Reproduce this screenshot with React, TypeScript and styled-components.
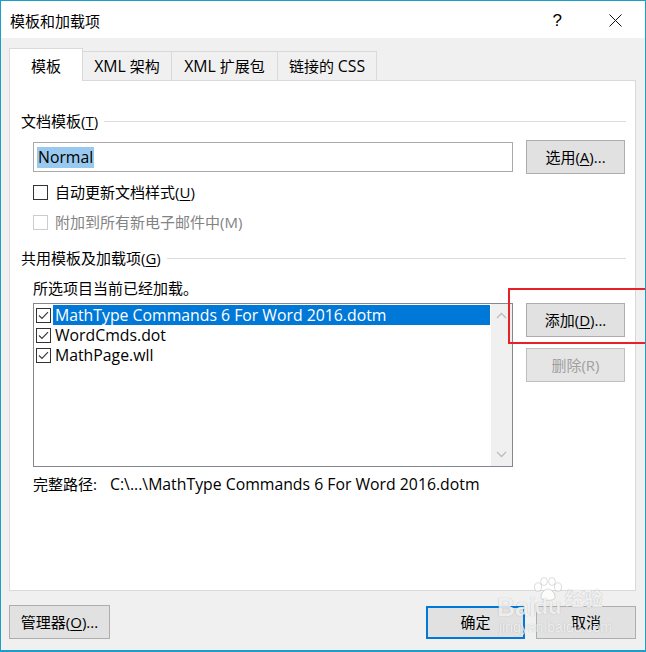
import React from 'react';
import styled, { createGlobalStyle } from 'styled-components';

const GlobalStyle = createGlobalStyle`
  html, body {
    margin: 0;
    padding: 0;
    background: #ffffff;
  }
  * {
    box-sizing: border-box;
  }
`;

const FONT = `"Open Sans", "Noto Sans CJK SC", sans-serif`;

const addins = [
  { name: 'MathType Commands 6 For Word 2016.dotm', selected: true },
  { name: 'WordCmds.dot', selected: false },
  { name: 'MathPage.wll', selected: false },
];

const tabs = [
  { latin: '', cjk: '模板', width: 74, active: true },
  { latin: 'XML ', cjk: '架构', width: 90, active: false },
  { latin: 'XML ', cjk: '扩展包', width: 107, active: false },
  { latin: '', cjk: '链接的 ', tail: 'CSS', width: 100, active: false },
];

const CheckMark = () => (
  <svg width="11" height="9" viewBox="0 0 11 9">
    <path d="M1 4.5 L4 7.5 L10 1.2" fill="none" stroke="#3c3c3c" strokeWidth="1.2" />
  </svg>
);

const Chevron = ({ up }: { up?: boolean }) => (
  <svg width="11" height="7" viewBox="0 0 11 7">
    <path
      d={up ? 'M1 6 L5.5 1.5 L10 6' : 'M1 1 L5.5 5.5 L10 1'}
      fill="none"
      stroke="#bcbcbc"
      strokeWidth="1.3"
    />
  </svg>
);

const CloseIcon = () => (
  <svg width="13" height="13" viewBox="0 0 13 13">
    <path d="M0.5 0.5 L12.5 12.5 M12.5 0.5 L0.5 12.5" stroke="#111" strokeWidth="1" />
  </svg>
);

const Paw = () => (
  <svg width="30" height="24" viewBox="0 0 30 24">
    <g fill="rgba(255,255,255,0.8)" stroke="rgba(0,0,0,0.14)" strokeWidth="1">
      <ellipse cx="5" cy="10" rx="3.5" ry="4.2" />
      <ellipse cx="11" cy="4.5" rx="3.3" ry="4" />
      <ellipse cx="19" cy="4.5" rx="3.3" ry="4" />
      <ellipse cx="25" cy="10" rx="3.5" ry="4.2" />
      <path d="M8 21 C8 15 12 12 15 12 C18 12 22 15 22 21 C22 24 8 24 8 21 Z" />
    </g>
  </svg>
);

const App = () => {
  return (
    <>
      <GlobalStyle />
      <Window>
        <TitleBar>
          <Title>模板和加载项</Title>
          <TitleButtons>
            <HelpMark>?</HelpMark>
            <CloseIcon />
          </TitleButtons>
        </TitleBar>

        <Body>
          <TabStrip>
            {tabs.map((t) => (
              <Tab key={t.cjk} $active={t.active} $width={t.width}>
                {t.latin && <Latin>{t.latin}</Latin>}
                {t.cjk}
                {t.tail && <Latin>{t.tail}</Latin>}
              </Tab>
            ))}
          </TabStrip>

          <Panel>
            <GroupHeader $top={30}>
              <GroupTitle>
                文档模板(<Key>T</Key>)
              </GroupTitle>
              <GroupLine />
            </GroupHeader>

            <TemplateRow>
              <TextInput>
                <Selection>
                  <Latin>Normal</Latin>
                </Selection>
              </TextInput>
              <DialogButton>
                选用(<Key>A</Key>)...
              </DialogButton>
            </TemplateRow>

            <CheckRow $top={8}>
              <CheckBox />
              <CheckLabel>
                自动更新文档样式(<Key>U</Key>)
              </CheckLabel>
            </CheckRow>
            <CheckRow $top={10}>
              <CheckBox $disabled />
              <CheckLabel $disabled>附加到所有新电子邮件中(M)</CheckLabel>
            </CheckRow>

            <GroupHeader $top={16}>
              <GroupTitle>
                共用模板及加载项(<Key>G</Key>)
              </GroupTitle>
              <GroupLine />
            </GroupHeader>

            <Caption>所选项目当前已经加载。</Caption>

            <AddinRow>
              <ListBox>
                <ListItems>
                  {addins.map((a) => (
                    <ListItem key={a.name}>
                      <ListCheck>
                        <CheckMark />
                      </ListCheck>
                      <ItemText $selected={a.selected}>
                        <Latin>{a.name}</Latin>
                      </ItemText>
                    </ListItem>
                  ))}
                </ListItems>
                <ScrollBar>
                  <Chevron up />
                  <Chevron />
                </ScrollBar>
              </ListBox>
              <ButtonColumn>
                <DialogButton>
                  添加(<Key>D</Key>)...
                </DialogButton>
                <DialogButton $disabled>删除(R)</DialogButton>
                <Highlight />
              </ButtonColumn>
            </AddinRow>

            <PathRow>
              <PathLabel>完整路径:</PathLabel>
              <Latin>C:\...\MathType Commands 6 For Word 2016.dotm</Latin>
            </PathRow>
          </Panel>
        </Body>

        <Footer>
          <DialogButton $width={101} $height={34}>
            管理器(<Key>O</Key>)...
          </DialogButton>
          <FooterRight>
            <DialogButton $default $height={33}>
              确定
            </DialogButton>
            <DialogButton $width={100} $height={33}>
              取消
            </DialogButton>
          </FooterRight>
          <Watermark>
            <WatermarkLogo>
              <span>Bai</span>
              <DuStack>
                <Paw />
                <DuText>du</DuText>
              </DuStack>
              <WatermarkCjk>经验</WatermarkCjk>
            </WatermarkLogo>
            <WatermarkUrl>jingyan.baidu.com</WatermarkUrl>
          </Watermark>
        </Footer>
      </Window>
    </>
  );
};

export default App;

const Window = styled.div`
  position: relative;
  display: flex;
  flex-direction: column;

  width: 646px;
  height: 652px;
  border: 1px solid #1a9fc9;
  border-bottom-width: 2px;
  background: #f0f0f0;
  font-family: ${FONT};
  font-size: 15px;
  color: #000;
  overflow: hidden;
`;

const Latin = styled.span`
  font-size: 15.8px;
`;

const TitleBar = styled.div`
  display: flex;
  align-items: center;
  justify-content: space-between;

  height: 37px;
  padding: 0 23px 0 9px;
  background: #ffffff;
`;

const Title = styled.span`
  font-size: 15px;
  line-height: 20px;
  margin-top: 2px;
`;

const TitleButtons = styled.div`
  display: flex;
  align-items: center;
  gap: 47px;
  margin-top: 2px;
`;

const HelpMark = styled.span`
  font-family: "Liberation Sans", sans-serif;
  font-size: 17px;
  line-height: 20px;
`;

const Body = styled.div`
  display: flex;
  flex-direction: column;
  padding: 10px 9px 0 8px;
`;

const TabStrip = styled.div`
  position: relative;
  z-index: 1;
  display: flex;
  align-items: flex-end;
  height: 33px;
  margin-bottom: -1px;
`;

const Tab = styled.div<{ $active?: boolean; $width: number }>`
  display: flex;
  align-items: center;
  justify-content: center;

  width: ${({ $width }) => $width}px;
  height: ${({ $active }) => ($active ? '33px' : '30px')};
  padding-top: ${({ $active }) => ($active ? '2px' : '0')};
  margin-left: ${({ $active }) => ($active ? '0' : '-1px')};
  border: 1px solid #d9d9d9;
  border-bottom: ${({ $active }) => ($active ? 'none' : '1px solid #d9d9d9')};
  background: ${({ $active }) => ($active ? '#ffffff' : '#f0f0f0')};
  line-height: 20px;
  white-space: pre;
`;

const Panel = styled.div`
  position: relative;
  display: flex;
  flex-direction: column;

  height: 511px;
  padding: 0 9px 0 23px;
  border: 1px solid #d9d9d9;
  background: #ffffff;
`;

const GroupHeader = styled.div<{ $top: number }>`
  display: flex;
  align-items: center;
  gap: 6px;
  height: 20px;
  margin-top: ${({ $top }) => $top}px;
  margin-left: -12px;
`;

const GroupTitle = styled.span`
  line-height: 20px;
  white-space: nowrap;
`;

const GroupLine = styled.div`
  flex: 1;
  height: 1px;
  background: #dcdcdc;
`;

const Key = styled.span`
  text-decoration: underline;
  text-underline-offset: 2px;
`;

const TemplateRow = styled.div`
  display: flex;
  align-items: center;
  justify-content: space-between;
  height: 34px;
  margin-top: 9px;
  padding-right: 1px;
`;

const TextInput = styled.div`
  display: flex;
  align-items: center;

  width: 480px;
  height: 30px;
  padding-left: 3px;
  border: 1px solid #a9a9a9;
  background: #ffffff;
`;

const Selection = styled.span`
  padding: 0 1px;
  background: #99c9ef;
  line-height: 21px;
`;

const DialogButton = styled.div<{
  $disabled?: boolean;
  $default?: boolean;
  $width?: number;
  $height?: number;
}>`
  display: flex;
  align-items: center;
  justify-content: center;
  flex: none;

  width: ${({ $width }) => $width ?? 99}px;
  height: ${({ $height }) => $height ?? 34}px;
  border: ${({ $default, $disabled }) =>
    $default ? '2px solid #0078d7' : $disabled ? '1px solid #bfbfbf' : '1px solid #adadad'};
  background: ${({ $disabled }) => ($disabled ? '#e5e5e5' : '#e1e1e1')};
  color: ${({ $disabled }) => ($disabled ? '#a0a0a0' : '#000')};
  line-height: 20px;
  white-space: nowrap;
`;

const CheckRow = styled.div<{ $top: number }>`
  display: flex;
  align-items: center;
  gap: 7px;
  height: 20px;
  margin-top: ${({ $top }) => $top}px;
`;

const CheckBox = styled.div<{ $disabled?: boolean }>`
  width: 15px;
  height: 15px;
  border: 1px solid ${({ $disabled }) => ($disabled ? '#cccccc' : '#333333')};
  background: #ffffff;
`;

const CheckLabel = styled.span<{ $disabled?: boolean }>`
  line-height: 20px;
  color: ${({ $disabled }) => ($disabled ? '#838383' : '#000')};
`;

const Caption = styled.div`
  height: 20px;
  margin-top: 10px;
  line-height: 20px;
`;

const AddinRow = styled.div`
  display: flex;
  justify-content: space-between;
  margin-top: 5px;
  padding-right: 1px;
`;

const ListBox = styled.div`
  display: flex;
  width: 480px;
  height: 164px;
  border: 1px solid #828790;
  background: #ffffff;
`;

const ListItems = styled.div`
  flex: 1;
  display: flex;
  flex-direction: column;
  padding: 1px 1px 0 2px;
`;

const ListItem = styled.div`
  display: flex;
  align-items: center;
  gap: 2px;
  height: 20px;
`;

const ListCheck = styled.div`
  display: flex;
  align-items: center;
  justify-content: center;
  flex: none;

  width: 15px;
  height: 15px;
  border: 1px solid #333333;
  background: #ffffff;
`;

const ItemText = styled.span<{ $selected?: boolean }>`
  flex: 1;
  height: 20px;
  padding-left: 2px;
  line-height: 20px;
  background: ${({ $selected }) => ($selected ? '#0078d7' : 'transparent')};
  color: ${({ $selected }) => ($selected ? '#ffffff' : '#000')};
  white-space: nowrap;
`;

const ScrollBar = styled.div`
  display: flex;
  flex-direction: column;
  align-items: center;
  justify-content: space-between;

  width: 21px;
  padding: 8px 0 8px;
  background: #f0f0f0;
`;

const ButtonColumn = styled.div`
  position: relative;
  display: flex;
  flex-direction: column;
  gap: 11px;
`;

const Highlight = styled.div`
  position: absolute;
  left: -18px;
  top: -15px;
  width: 140px;
  height: 56px;
  border: 2px solid #e8202a;
  border-right: none;
  pointer-events: none;
`;

const PathRow = styled.div`
  display: flex;
  height: 20px;
  margin-top: 7px;
  line-height: 20px;
  white-space: nowrap;
`;

const PathLabel = styled.span`
  width: 77px;
`;

const Footer = styled.div`
  position: relative;
  display: flex;
  align-items: center;
  justify-content: space-between;

  margin-top: 14px;
  padding: 0 9px 0 8px;
`;

const FooterRight = styled.div`
  display: flex;
  align-items: center;
  gap: 11px;
`;

const Watermark = styled.div`
  position: absolute;
  left: 496px;
  top: -28px;
  display: flex;
  flex-direction: column;
  align-items: flex-start;
  white-space: nowrap;
  pointer-events: none;
`;

const WatermarkLogo = styled.div`
  display: flex;
  align-items: flex-end;
  font-family: "Liberation Sans", sans-serif;
  font-size: 25px;
  font-weight: bold;
  line-height: 24px;
  color: rgba(255, 255, 255, 0.82);
  text-shadow: 0 0 1px rgba(0, 0, 0, 0.3);
`;

const DuStack = styled.span`
  display: flex;
  flex-direction: column;
  align-items: center;
  margin-left: -3px;
`;

const DuText = styled.span`
  margin-top: -6px;
  font-size: 22px;
`;

const WatermarkCjk = styled.span`
  align-self: center;
  margin-left: 2px;
  font-family: "Noto Sans CJK SC", sans-serif;
  font-size: 19px;
  line-height: 24px;
`;

const WatermarkUrl = styled.div`
  margin-left: 2px;
  font-family: "Liberation Sans", sans-serif;
  font-size: 14px;
  line-height: 17px;
  color: rgba(255, 255, 255, 0.82);
  text-shadow: 0 0 1px rgba(0, 0, 0, 0.25);
`;
